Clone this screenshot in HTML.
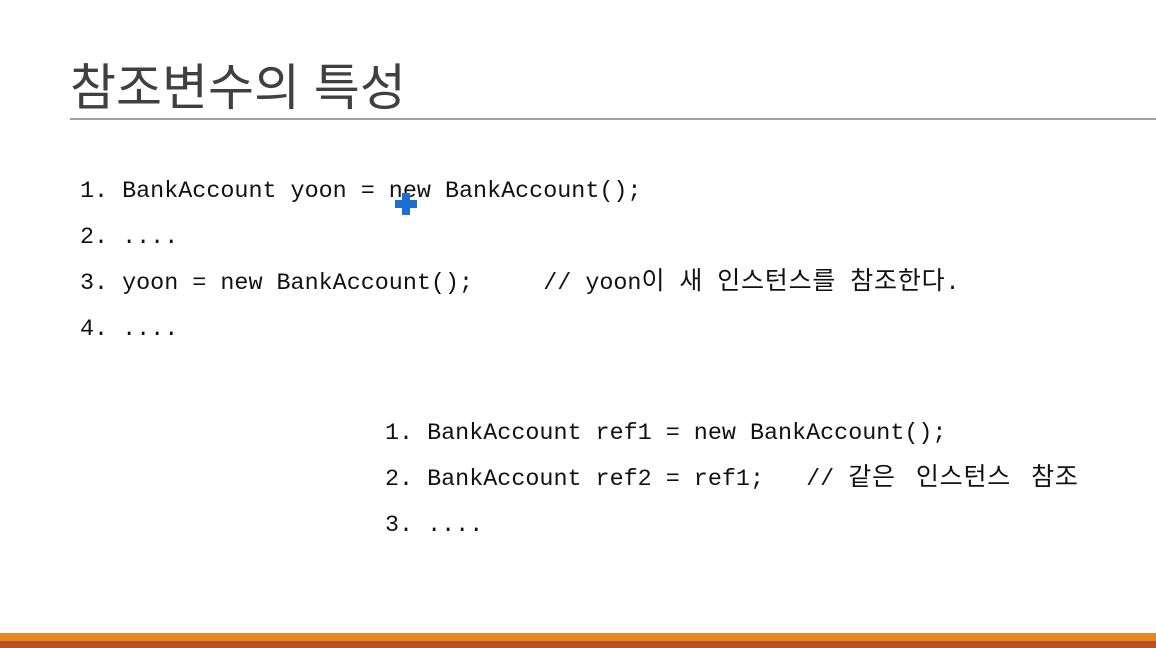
<!DOCTYPE html>
<html><head><meta charset="utf-8"><style>
body{margin:0;width:1156px;height:648px;background:#fff;position:relative;overflow:hidden}
.t{position:absolute;left:70px;top:48px;font:50px "Liberation Sans","Noto Sans CJK KR",sans-serif;color:#404040;white-space:nowrap}
.hr{position:absolute;left:70px;top:118px;width:1086px;height:2px;background:#a0a0a0}
.c{position:absolute;font:23.4px "Liberation Mono","Noto Sans CJK KR",monospace;color:#111;white-space:pre;line-height:46px}
.k{font:25px "Noto Sans CJK KR",sans-serif;letter-spacing:0.8px}
.s{display:inline-block;width:6px}
.b1{position:absolute;left:0;top:633px;width:1156px;height:8px;background:#e28a1e}
.b2{position:absolute;left:0;top:641px;width:1156px;height:7px;background:#bb5128}
</style></head><body>
<div class="t">참조변수의 특성</div>
<div class="hr"></div>
<div class="c" style="left:80px;top:169px">1. BankAccount yoon = new BankAccount();
2. ....
3. yoon = new BankAccount();     // yoon<span class="k">이</span> <span class="k">새</span> <span class="k">인스턴스를</span> <span class="k">참조한다</span>.
4. ....</div>
<div class="c" style="left:385px;top:411px">1. BankAccount ref1 = new BankAccount();
2. BankAccount ref2 = ref1;   // <span class="k">같은</span> <span class="s"></span><span class="k">인스턴스</span> <span class="s"></span><span class="k">참조</span>
3. ....</div>
<svg style="position:absolute;left:395px;top:193px" width="22" height="22"><path d="M7 0h8v7h7v8h-7v7h-8v-7h-7v-8h7z" fill="#1a6fd0"/></svg>
<div class="b1"></div><div class="b2"></div>
</body></html>
